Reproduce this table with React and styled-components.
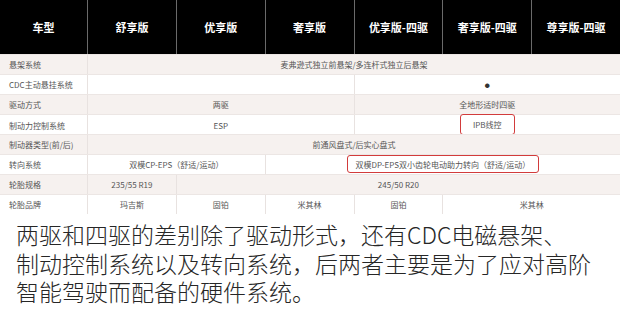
import styled, { createGlobalStyle } from "styled-components";

const cjk = `"Noto Sans CJK SC", "Noto Sans", sans-serif`;

const columns = ["车型", "舒享版", "优享版", "奢享版", "优享版-四驱", "奢享版-四驱", "尊享版-四驱"];

const rows = [
  { label: "悬架系统", cells: [{ span: 6, text: "麦弗逊式独立前悬架/多连杆式独立后悬架" }] },
  { label: "CDC主动悬挂系统", cells: [{ span: 3, text: "" }, { span: 3, text: "●", dot: true }] },
  { label: "驱动方式", cells: [{ span: 3, text: "两驱" }, { span: 3, text: "全地形适时四驱" }] },
  {
    label: "制动力控制系统",
    cells: [{ span: 3, text: "ESP" }, { span: 3, text: "IPB线控", mark: "wide" }],
  },
  { label: "制动器类型(前/后)", cells: [{ span: 6, text: "前通风盘式/后实心盘式" }] },
  {
    label: "转向系统",
    cells: [
      { span: 2, text: "双模CP-EPS（舒适/运动）" },
      { span: 4, text: "双模DP-EPS双小齿轮电动助力转向（舒适/运动）", mark: "slim" },
    ],
  },
  { label: "轮胎规格", cells: [{ span: 1, text: "235/55 R19" }, { span: 5, text: "245/50 R20" }] },
  {
    label: "轮胎品牌",
    cells: [
      { span: 1, text: "玛吉斯" },
      { span: 1, text: "固铂" },
      { span: 1, text: "米其林" },
      { span: 1, text: "固铂" },
      { span: 2, text: "米其林" },
    ],
  },
];

export default function App() {
  return (
    <>
      <GlobalStyle />
      <Page>
        <Table>
          <HeaderRow>
            {columns.map((col) => (
              <HeadCell key={col}>{col}</HeadCell>
            ))}
          </HeaderRow>
          {rows.map((row, i) => (
            <Row key={row.label} $shaded={i % 2 === 0}>
              <LabelCell>{row.label}</LabelCell>
              {row.cells.map((cell, j) => (
                <Cell key={j} $span={cell.span}>
                  {cell.mark ? (
                    <Marked $kind={cell.mark}>{cell.text}</Marked>
                  ) : cell.dot ? (
                    <Dot>{cell.text}</Dot>
                  ) : (
                    cell.text
                  )}
                </Cell>
              ))}
            </Row>
          ))}
        </Table>
        <Caption>
          两驱和四驱的差别除了驱动形式，还有CDC电磁悬架、
          <br />
          制动控制系统以及转向系统，后两者主要是为了应对高阶
          <br />
          智能驾驶而配备的硬件系统。
        </Caption>
      </Page>
    </>
  );
}

const GlobalStyle = createGlobalStyle`
  body {
    margin: 0;
    background: #fff;
    font-family: ${cjk};
  }
`;

const Page = styled.div`
  width: 620px;
  height: 312px;
  overflow: hidden;
  background: #fff;
`;

const Table = styled.div`
  display: flex;
  flex-direction: column;
`;

const HeaderRow = styled.div`
  display: grid;
  grid-template-columns: 87px repeat(6, 1fr);
  height: 54px;
  background: #000;
`;

const HeadCell = styled.div`
  display: flex;
  align-items: center;
  justify-content: center;
  color: #fff;
  font-size: 11px;
  font-weight: 700;
  border-left: 1px solid #6a6a6a;
  &:first-child {
    border-left: none;
  }
`;

const Row = styled.div`
  display: grid;
  grid-template-columns: 87px repeat(6, 1fr);
  height: 20px;
  background: ${(p) => (p.$shaded ? "#f6f1ef" : "#fff")};
  border-top: 1px solid #ece6e4;
  box-sizing: border-box;
`;

const LabelCell = styled.div`
  display: flex;
  align-items: center;
  padding-left: 9px;
  font-size: 8px;
  color: #555;
  white-space: nowrap;
`;

const Cell = styled.div`
  grid-column: span ${(p) => p.$span};
  display: flex;
  align-items: center;
  justify-content: center;
  font-size: 8px;
  color: #555;
  white-space: nowrap;
  border-left: 1px solid #e8e2e0;
`;

const Dot = styled.span`
  font-size: 5px;
  color: #333;
`;

const Marked = styled.span`
  display: inline-flex;
  align-items: center;
  justify-content: center;
  box-sizing: border-box;
  height: ${(p) => (p.$kind === "wide" ? "21px" : "18px")};
  padding: 0 ${(p) => (p.$kind === "wide" ? "12px" : "8px")};
  margin-top: -1px;
  border: 1.5px solid #d23b3b;
  border-radius: 3px;
  background: #fff;
`;

const Caption = styled.p`
  margin: 6px 0 0;
  padding-left: 16px;
  font-family: "Noto Sans CJK SC Light", "Noto Sans CJK SC DemiLight", ${cjk};
  font-size: 23px;
  font-weight: 300;
  line-height: 28.5px;
  color: #262626;
  white-space: nowrap;
`;
